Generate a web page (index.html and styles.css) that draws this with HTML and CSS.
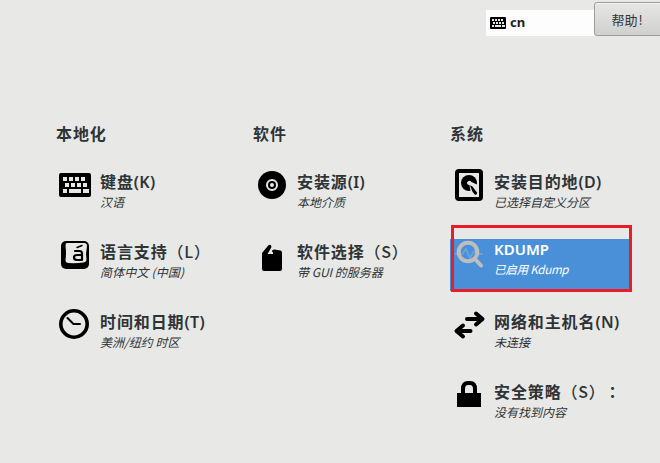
FILE: index.html
```html
<!DOCTYPE html>
<html lang="zh-CN">
<head>
<meta charset="utf-8">
<title>安装信息摘要</title>
<link rel="stylesheet" href="styles.css">
</head>
<body>
<header class="topbar">
  <div class="layout">
    <svg width="16" height="12" viewBox="0 0 32 24"><rect width="32" height="24" rx="2"/><path class="cut" d="M4 4h4v4H4zm6 0h4v4h-4zm6 0h4v4h-4zm6 0h4v4h-4zM6 10h4v4H6zm6 0h4v4h-4zm6 0h4v4h-4zm6 0h4v4h-4zM4 16h4v4H4zm6 0h12v4H10zm14 0h6v4h-6z"/></svg>
    <span>cn</span>
  </div>
  <button class="help">帮助<span>!</span></button>
</header>
<main class="hub">
  <section class="category">
    <h2>本地化</h2>
    <div class="spoke">
      <svg class="icon" viewBox="0 0 34 34"><rect x="1" y="4" width="32" height="24" rx="2"/><path class="cut" d="M5 8h4v4H5zm6 0h4v4h-4zm6 0h4v4h-4zm6 0h4v4h-4zM7 14h4v4H7zm6 0h4v4h-4zm6 0h4v4h-4zm6 0h4v4h-4zM5 20h4v4H5zm6 0h12v4H11zm14 0h6v4h-6z"/></svg>
      <div class="text"><h3>键盘<span class="lat">(K)</span></h3><p>汉语</p></div>
    </div>
    <div class="spoke">
      <svg class="icon" viewBox="0 0 34 34"><rect x="3" y="2" width="28" height="28" rx="5"/><path class="cut" d="M9 4h17q3 0 3 3l-1 8 .5 5q0 3-3 3.500-8 1-15 .5-3 0-3-3 1-7 0-14 0-3 1.500-3z"/><path class="line" stroke-width="1.500" d="M19 8.500l5-2"/><path class="line" stroke-width="2.200" d="M17 12h4.500q2.500 0 2.500 2.500V21M24 16h-5q-3 0-3 2.500t3 2.500h5"/></svg>
      <div class="text"><h3>语言支持<span class="wide">（L）</span></h3><p class="loose">简体中文 (中国)</p></div>
    </div>
    <div class="spoke">
      <svg class="icon" viewBox="0 0 34 34"><circle class="line" cx="16" cy="15" r="13.200" stroke-width="3.600"/><path class="line" stroke-width="2" d="M9.500 9l6 6H22"/></svg>
      <div class="text"><h3>时间和日期<span class="lat">(T)</span></h3><p>美洲/纽约 时区</p></div>
    </div>
  </section>
  <section class="category">
    <h2>软件</h2>
    <div class="spoke">
      <svg class="icon" viewBox="0 0 34 34"><circle cx="17" cy="16" r="14"/><circle class="ring" cx="17" cy="16" r="5"/><circle class="cut" cx="17" cy="16" r="2"/></svg>
      <div class="text"><h3>安装源<span class="lat">(I)</span></h3><p>本地介质</p></div>
    </div>
    <div class="spoke">
      <svg class="icon" viewBox="0 0 34 34"><path d="M7 14l5-6q2-3 3.500-2t.5 3L12.500 15H18v-1.500l-1-1 .5-1.500 2-.5 6 1q1.500.3 1.500 2V30q0 2-2 2H9q-2 0-2-2z"/></svg>
      <div class="text"><h3>软件选择<span class="wide">（S）</span></h3><p>带 GUI 的服务器</p></div>
    </div>
  </section>
  <section class="category">
    <h2>系统</h2>
    <div class="spoke">
      <svg class="icon" viewBox="0 0 34 34"><rect class="line" x="5" y="2" width="24" height="28" rx="2" stroke-width="4"/><path d="M17 6a8 8 0 1 0 0 16 8 8 0 0 0 0-16z"/><path class="cut" d="M15 13.500q2-3 4.500-.5l6.500 3v9h-7l-1.500-9q-2.500 0-2.500-2.500z"/><path d="M18 16.500l2 .5 5 6.500q.5 2.500-2 2.200l-2.500-3z"/></svg>
      <div class="text"><h3>安装目的地<span class="lat">(D)</span></h3><p>已选择自定义分区</p></div>
    </div>
    <div class="spoke selected">
      <svg class="icon" viewBox="0 0 34 34"><path class="pulse" d="M3 15h7l4-5 4 9 4-7 2 3h7"/><circle class="lens" cx="16" cy="13" r="9.300"/><path class="handle" d="M22.500 19.500l6.500 7"/></svg>
      <div class="text"><h3><span class="kd">KDUMP</span></h3><p>已启用 Kdump</p></div>
      <div class="callout"></div>
    </div>
    <div class="spoke">
      <svg class="icon" viewBox="0 0 34 34"><path class="line arrows" d="M15 10h14M24 4.500l6.500 5.500-6.500 5.500M18.500 22H5M11 16.500L4.500 22l6.500 5.500"/></svg>
      <div class="text"><h3>网络和主机名<span class="lat">(N)</span></h3><p>未连接</p></div>
    </div>
    <div class="spoke">
      <svg class="icon" viewBox="0 0 34 34"><path class="line" stroke-width="4" d="M11 16v-6q0-6 5-6h2q5 0 5 6v6"/><path d="M5 14h24v14H5z"/></svg>
      <div class="text"><h3>安全策略<span class="wide">（S）</span><span class="colon" lang="zh-TW">：</span></h3><p>没有找到内容</p></div>
    </div>
  </section>
</main>
</body>
</html>
```
FILE: styles.css
```css
* { box-sizing: border-box; }
body {
  margin: 0;
  width: 660px;
  height: 463px;
  overflow: hidden;
  background: #e8e8e6;
  color: #2e3436;
  font-family: "Noto Sans CJK SC", sans-serif;
}
h2, h3, p { margin: 0; white-space: nowrap; }

.topbar {
  display: flex;
  justify-content: flex-end;
  height: 37px;
}
.layout {
  display: flex;
  align-items: center;
  gap: 4px;
  width: 108px;
  height: 26px;
  margin-top: 10px;
  padding-left: 4px;
  background: #fdfdfd;
  color: #1c1f20;
  font: bold 13px "Noto Sans", sans-serif;
}
.layout span { margin-top: -2px; }
.help {
  width: 70px;
  height: 34px;
  margin: 2px -4px 0 0;
  padding: 0 4px 0 0;
  border: 1px solid #9c9c98;
  border-radius: 3px;
  background: linear-gradient(#e6e6e4, #d0d0ce);
  box-shadow: inset 0 1px #f5f5f4;
  color: #2e3436;
  font: 13px "Noto Sans CJK SC", sans-serif;
}
.help span { margin-left: 1px; }

.hub {
  display: grid;
  grid-template-columns: 197px 197px 182px;
  margin: 84px 0 0 56px;
}
.category h2 {
  height: 48px;
  font-size: 16px;
  font-weight: 700;
  line-height: 24px;
  letter-spacing: .9px;
}
.category .spoke {
  position: relative;
  display: flex;
  gap: 8px;
  height: 52px;
  margin-bottom: 18px;
  padding-left: 2px;
}
.icon { flex: none; width: 34px; height: 34px; overflow: visible; }
.text { display: flex; flex-direction: column; }
h3 {
  height: 24px;
  font-size: 16px;
  font-weight: 700;
  line-height: 24px;
  letter-spacing: .9px;
}
.lat { font-family: "Noto Sans", sans-serif; font-weight: 600; font-size: 16px; letter-spacing: .3px; }
.wide { font-weight: 500; letter-spacing: .7px; }
.colon { margin-left: 7px; font-family: "Noto Sans CJK SC", sans-serif; }
p {
  font-size: 12px;
  font-style: italic;
  line-height: 18px;
}
.loose { letter-spacing: .15px; }
.selected { width: 182px; background: #4a90d9; color: #fff; }
.selected .text { margin-top: -3px; }
.selected p { font-size: 11.6px; letter-spacing: -.3px; }
.kd { font-family: "Noto Sans", sans-serif; font-size: 15px; font-weight: 600; letter-spacing: 0; }
.callout {
  position: absolute;
  left: 1px;
  top: -14px;
  width: 181px;
  height: 67px;
  border: 3px solid #ed1c24;
}

.cut { fill: #e8e8e6; }
.line { fill: none; stroke: #000; stroke-linecap: round; stroke-linejoin: round; }
.arrows { stroke-width: 4; }
.ring { fill: none; stroke: #e8e8e6; stroke-width: 2; }
.lens { fill: none; stroke: #bebebe; stroke-width: 4; }
.handle { fill: none; stroke: #bebebe; stroke-width: 4; stroke-linecap: round; }
.pulse { fill: none; stroke: #6da0d4; stroke-width: 2; }
```
